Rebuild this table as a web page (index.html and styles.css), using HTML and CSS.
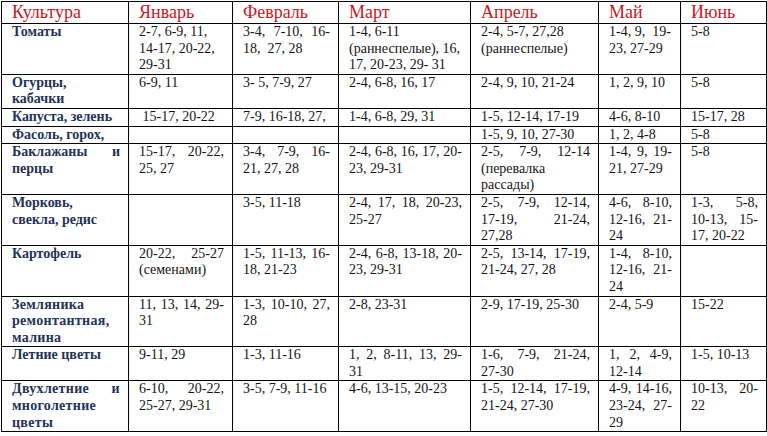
FILE: index.html
```html
<!DOCTYPE html>
<html lang="ru">
<head>
<meta charset="utf-8">
<title>Календарь посевов</title>
<link rel="stylesheet" href="styles.css">
</head>
<body>
<table class="cal">
  <colgroup>
    <col class="c-crop">
    <col class="c-jan">
    <col class="c-feb">
    <col class="c-mar">
    <col class="c-apr">
    <col class="c-may">
    <col class="c-jun">
  </colgroup>
  <thead>
    <tr class="head">
      <th>Культура</th>
      <th>Январь</th>
      <th>Февраль</th>
      <th>Март</th>
      <th>Апрель</th>
      <th>Май</th>
      <th>Июнь</th>
    </tr>
  </thead>
  <tbody>
    <tr>
      <td class="crop">Томаты</td>
      <td>2-7, 6-9, 11,<br>14-17, 20-22,<br>29-31</td>
      <td><span class="j">3-4, 7-10, 16-</span>18,&nbsp; 27, 28</td>
      <td>1-4, 6-11<br>(раннеспелые), 16,<br>17, 20-23, 29- 31</td>
      <td>2-4, 5-7, 27,28<br>(раннеспелые)</td>
      <td>1-4, 9,&nbsp; 19-<br>23, 27-29</td>
      <td>5-8</td>
    </tr>
    <tr>
      <td class="crop">Огурцы,<br>кабачки</td>
      <td>6-9, 11</td>
      <td>3- 5, 7-9, 27</td>
      <td>2-4, 6-8, 16, 17</td>
      <td>2-4, 9, 10, 21-24</td>
      <td>1, 2, 9, 10</td>
      <td>5-8</td>
    </tr>
    <tr>
      <td class="crop">Капуста, зелень</td>
      <td>&nbsp;15-17, 20-22</td>
      <td>7-9, 16-18, 27,</td>
      <td>1-4, 6-8, 29, 31</td>
      <td>1-5, 12-14, 17-19</td>
      <td>4-6, 8-10</td>
      <td>15-17, 28</td>
    </tr>
    <tr>
      <td class="crop">Фасоль, горох,</td>
      <td></td>
      <td></td>
      <td></td>
      <td>1-5, 9, 10, 27-30</td>
      <td>1, 2, 4-8</td>
      <td>5-8</td>
    </tr>
    <tr>
      <td class="crop"><span class="j">Баклажаны и</span>перцы</td>
      <td><span class="j">15-17, 20-22,</span>25, 27</td>
      <td><span class="j">3-4, 7-9, 16-</span>21, 27, 28</td>
      <td><span class="j">2-4, 6-8, 16, 17, 20-</span>23, 29-31</td>
      <td><span class="j">2-5, 7-9, 12-14</span>(перевалка<br>рассады)</td>
      <td><span class="j">1-4, 9, 19-</span>21, 27-29</td>
      <td>5-8</td>
    </tr>
    <tr>
      <td class="crop">Морковь,<br>свекла, редис</td>
      <td></td>
      <td>3-5, 11-18</td>
      <td><span class="j">2-4, 17, 18, 20-23,</span>25-27</td>
      <td><span class="j">2-5, 7-9, 12-14,</span><span class="j">17-19, 21-24,</span>27,28</td>
      <td><span class="j">4-6, 8-10,</span><span class="j">12-16, 21-</span>24</td>
      <td><span class="j">1-3, 5-8,</span><span class="j">10-13, 15-</span>17, 20-22</td>
    </tr>
    <tr>
      <td class="crop">Картофель</td>
      <td><span class="j">20-22, 25-27</span>(семенами)</td>
      <td><span class="j">1-5, 11-13, 16-</span>18, 21-23</td>
      <td><span class="j">2-4, 6-8, 13-18, 20-</span>23, 29-31</td>
      <td><span class="j">2-5, 13-14, 17-19,</span>21-24, 27, 28</td>
      <td><span class="j">1-4, 8-10,</span><span class="j">12-16, 21-</span>24</td>
      <td></td>
    </tr>
    <tr>
      <td class="crop sp">Земляника<br>ремонтантная,<br>малина</td>
      <td><span class="j">11, 13, 14, 29-</span>31</td>
      <td><span class="j">1-3, 10-10, 27,</span>28</td>
      <td>2-8, 23-31</td>
      <td>2-9, 17-19, 25-30</td>
      <td>2-4, 5-9</td>
      <td>15-22</td>
    </tr>
    <tr>
      <td class="crop">Летние цветы</td>
      <td>9-11, 29</td>
      <td>1-3, 11-16</td>
      <td><span class="j">1, 2, 8-11, 13, 29-</span>31</td>
      <td><span class="j">1-6, 7-9, 21-24,</span>27-30</td>
      <td><span class="j">1, 2, 4-9,</span>12-14</td>
      <td>1-5, 10-13</td>
    </tr>
    <tr>
      <td class="crop sp"><span class="j">Двухлетние и</span>многолетние<br>цветы</td>
      <td><span class="j">6-10, 20-22,</span>25-27, 29-31</td>
      <td>3-5, 7-9, 11-16</td>
      <td>4-6, 13-15, 20-23</td>
      <td><span class="j">1-5, 12-14, 17-19,</span>21-24, 27-30</td>
      <td><span class="j">4-9, 14-16,</span><span class="j">23-24, 27-</span>29</td>
      <td><span class="j">10-13, 20-</span>22</td>
    </tr>
  </tbody>
</table>
</body>
</html>
```

FILE: styles.css
```css
html, body {
  margin: 0;
  padding: 0;
  background: #ffffff;
}

.cal {
  margin: 1px 0 0 1px;
  width: 765px;
  table-layout: fixed;
  border-collapse: collapse;
  font-family: "Liberation Serif", "DejaVu Serif", serif;
  font-size: 14px;
  line-height: 16.6px;
  color: #141414;
}

.c-crop { width: 127px; }
.c-jan { width: 104px; }
.c-feb { width: 106px; }
.c-mar { width: 132px; }
.c-apr { width: 128px; }
.c-may { width: 82px; }
.c-jun { width: 86px; }

.cal th,
.cal td {
  border: 1px solid #000;
  padding: 0 8px 0 10px;
  vertical-align: top;
  text-align: left;
}

.head th {
  font-weight: normal;
  font-size: 18px;
  line-height: 21px;
  color: #c8161e;
}

.crop {
  font-weight: bold;
  color: #1f3257;
}

.sp {
  letter-spacing: 0.3px;
}

.j {
  display: block;
  text-align: justify;
  text-align-last: justify;
}
```
